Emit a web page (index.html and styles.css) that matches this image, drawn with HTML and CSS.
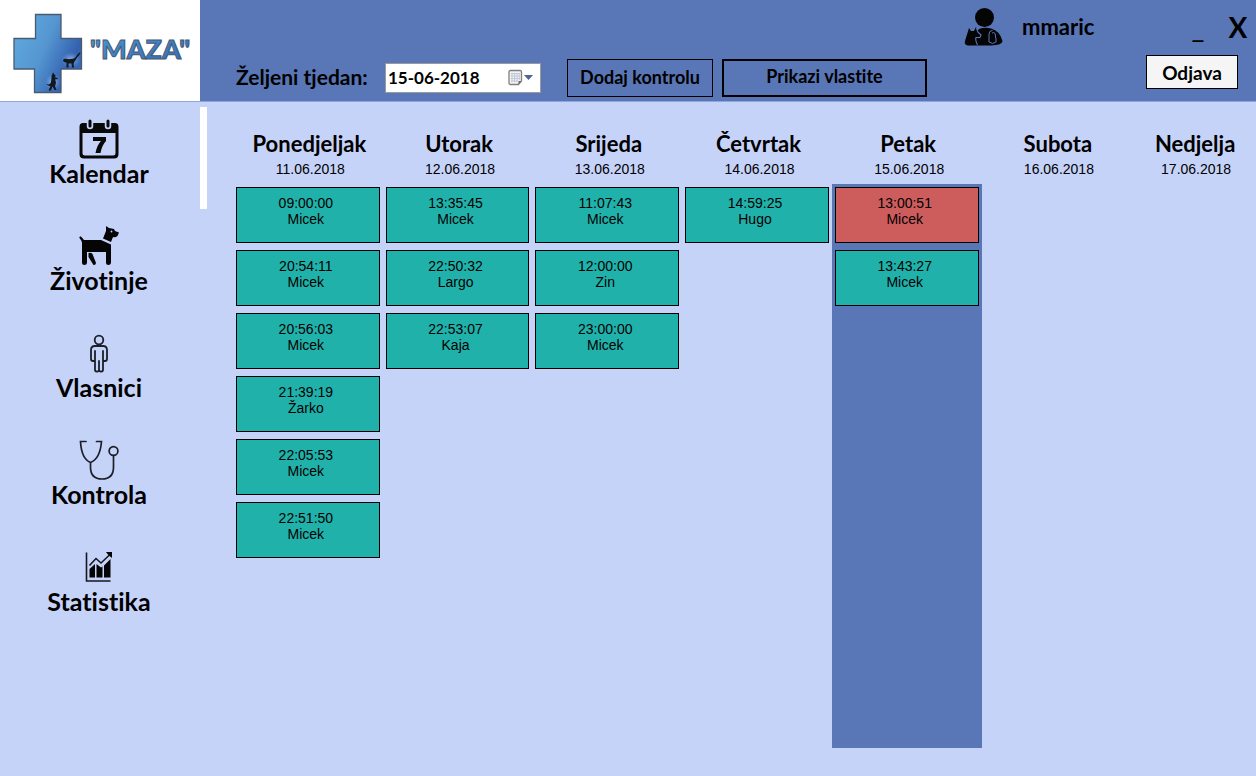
FILE: index.html
```html
<!DOCTYPE html>
<html lang="hr">
<head>
<meta charset="utf-8">
<meta name="viewport" content="width=device-width, initial-scale=1">
<title>"MAZA" – Kalendar</title>
<link rel="stylesheet" href="styles.css">
</head>
<body>
<header class="topbar">
  <div class="brand">
    <svg class="brand-logo" viewBox="0 0 200 101" role="img" aria-label="MAZA">
      <defs>
        <linearGradient id="cross" x1="0" y1="0.2" x2="1" y2="0.7">
          <stop offset="0" stop-color="#5fa9de"/><stop offset="0.45" stop-color="#5596d1"/><stop offset="0.85" stop-color="#3361b0"/><stop offset="1" stop-color="#3a6bb8"/>
        </linearGradient>
        <linearGradient id="letters" x1="0" y1="0" x2="1" y2="1">
          <stop offset="0" stop-color="#4c9bd8"/><stop offset="1" stop-color="#3566b4"/>
        </linearGradient>
        <radialGradient id="glow"><stop offset="0" stop-color="#b9d3f4" stop-opacity="0.8"/><stop offset="1" stop-color="#6b9bdc" stop-opacity="0"/></radialGradient>
      </defs>
      <path d="M35.500 14.500H61V38.500H81.500V69H61V92.500H34.500V69H14V38.500H35.500Z" fill="url(#cross)" stroke="#4a5b70" stroke-width="1.300"/>
      <ellipse cx="71" cy="60" rx="10" ry="8" fill="url(#glow)"/>
      <ellipse cx="53" cy="82" rx="8" ry="9" fill="url(#glow)"/>
      <path d="M63 60.500C64 58 67 59 69 59.300C72 58.500 74 59.500 76 56.500C77 54.500 79 53 80.500 52C80 55 78 56 76.500 58.500C75 61 74 62 73.500 64L74 67.500H72L71.500 63.500H68.500V67.500H66.500V62.500C65 62.500 63.500 62 63 60.500Z" fill="#101820"/>
      <path d="M53 72.500L54.500 74.500L56 76L54.500 77L57.500 78L58 79L55 79.500C56.500 82 56 84 55 86L56.500 90H54.500L52.500 86.500L51 90.500H48.500L50.500 86C49 86 47.500 85.500 46.500 84C49 85 50.500 84 51 82C51.500 79 51.500 78 51.500 76Z" fill="#101820"/>
      <text x="90" y="59" class="brand-name">"MAZA"</text>
    </svg>
  </div>
  <form class="toolbar">
    <label class="week-label" for="week">Željeni tjedan:</label>
    <div class="date-field">
      <input class="date-input" id="week" type="text" value="15-06-2018">
      <button class="date-open" type="button" aria-label="Otvori kalendar">
        <svg width="26" height="18" viewBox="0 0 26 18">
          <path d="M2.500 1.500H12Q13.500 1.500 13.500 3V12L10.500 15.500H2.500Q1 15.500 1 14V3Q1 1.500 2.500 1.500Z" fill="#f1f1f3" stroke="#857f7f" stroke-width="1.300"/>
          <path d="M3 4.500H11.500M3 7H11.500M3 9.500H11.500M3 12H10M4 4V13M6.500 4V13M9 4V13M11.300 4V11" stroke="#b9c3d0" stroke-width="0.800"/>
          <path d="M13.500 12H10.500V15.500Z" fill="#6f6868"/>
          <path d="M16 6H25L20.500 11Z" fill="#4a6596"/>
        </svg>
      </button>
    </div>
    <button class="btn btn-add" type="button">Dodaj kontrolu</button>
    <button class="btn btn-own" type="button">Prikazi vlastite</button>
  </form>
  <div class="account">
    <div class="account-row">
      <svg class="avatar" width="40" height="40" viewBox="0 0 40 40" aria-hidden="true">
        <circle cx="20.500" cy="10.500" r="9.500" fill="#050505"/>
        <path d="M15 22Q21 20 27 21.500Q36 24 38.500 34Q38.500 38 27 38.500H4Q0 38 1 34L5 21L7 24H10L12 20L13.500 24Z" fill="#050505"/>
        <path d="M12.500 21L13.800 25L17 28L16 30.500L12 30.500Q11 33 13.500 38" fill="none" stroke="#5976b6" stroke-width="1.100"/>
        <path d="M25 35V27Q25 23.500 28.500 23.500M32 31V35Q29 38 25 35M28 26Q32 24 31.500 31" fill="none" stroke="#5976b6" stroke-width="1"/>
      </svg>
      <span class="user-name">mmaric</span>
      <button class="win-btn win-min" type="button" aria-label="Smanji">_</button>
      <button class="win-btn" type="button" aria-label="Zatvori">X</button>
    </div>
    <button class="logout" type="button">Odjava</button>
  </div>
</header>
<div class="shell">
  <nav class="sidebar">
    <a class="nav-item nav-active" href="#kalendar" aria-current="page">
      <svg width="40" height="40" viewBox="0 0 40 40" aria-hidden="true">
        <path d="M4 4H36Q39.500 4 39.500 8V35Q39.500 39.500 35 39.500H5Q0.500 39.500 0.500 35V8Q0.500 4 4 4ZM3.500 14V34Q3.500 36.500 6 36.500H34Q36.500 36.500 36.500 34V14Z" fill="#080808" fill-rule="evenodd"/>
        <path d="M11 2V7M29 2V7" stroke="#c6d3f9" stroke-width="6.500" stroke-linecap="round"/>
        <path d="M11 2V7M29 2V7" stroke="#080808" stroke-width="3" stroke-linecap="round"/>
        <path d="M14 18H27V22Q23 26 21.500 34H16.500Q18 26 22 22H14Z" fill="#080808"/>
      </svg>
      <span>Kalendar</span>
    </a>
    <a class="nav-item" href="#zivotinje">
      <svg width="40" height="40" viewBox="0 0 40 40" aria-hidden="true">
        <path d="M0.500 12Q0 10 2 10.500L5 14H22L32 18.500V37Q31.500 39 29.500 39Q27 39 27 37V26H8V37Q7.500 39 5.500 39Q3 39 3 37V17Q3 15 0.500 12Z" fill="#050505"/>
        <path d="M9.500 27Q12 26 13.500 28L17 37Q16.500 39.500 14.500 39L9.500 31Z" fill="#050505"/>
        <path d="M27 0L30 2L35 3L36 5L40 6.500L38.500 10Q36 12 34 11L32 16L24 12.500L27 5Z" fill="#050505"/>
        <circle cx="32.500" cy="5.500" r="0.900" fill="#c6d3f9"/>
      </svg>
      <span>Životinje</span>
    </a>
    <a class="nav-item" href="#vlasnici">
      <svg width="40" height="40" viewBox="0 0 40 40" fill="none" stroke="#1c1f28" stroke-width="1.800" stroke-linecap="round" stroke-linejoin="round" aria-hidden="true">
        <circle cx="20" cy="7" r="4.300"/>
        <path d="M16 18V37Q16 38.500 17.700 38.500H18.500Q20 38.500 20 37V28V37Q20 38.500 21.500 38.500H22.300Q24 38.500 24 37V18M16 28H14Q12 28 12 26V17Q12 13 16 13H24Q28 13 28 17V26Q28 28 26 28H24"/>
      </svg>
      <span>Vlasnici</span>
    </a>
    <a class="nav-item" href="#kontrola">
      <svg width="40" height="40" viewBox="0 0 40 40" fill="none" stroke="#1c1f28" stroke-width="1.700" stroke-linecap="round" aria-hidden="true">
        <path d="M7 1.500H1.500Q2.500 19 11.500 22.500Q21 19 22.500 1.500H17.500M11.500 22.500V27Q11.500 39 23 39Q34.500 39 34.500 27V15.500"/>
        <circle cx="34.500" cy="11" r="4.400"/>
      </svg>
      <span>Kontrola</span>
    </a>
    <a class="nav-item" href="#statistika">
      <svg width="40" height="40" viewBox="0 0 40 40" aria-hidden="true">
        <path d="M7.500 5.500V34H31.500M10.500 18.500L17 11.500L22 16L31 7.500" fill="none" stroke="#15171c" stroke-width="1.600"/>
        <path d="M27 5H33V11L30.500 9L28.500 7Z" fill="#050505"/>
        <path d="M10.500 22L16 17V30.500H10.500ZM17.500 17L22 20.500L23.500 19.500V30.500H17.500ZM25 18.500L31.500 12V30.500H25Z" fill="#050505"/>
      </svg>
      <span>Statistika</span>
    </a>
  </nav>
  <main class="week">
    <section class="day">
      <h2 class="day-name">Ponedjeljak</h2>
      <p class="day-date">11.06.2018</p>
      <ul class="slots">
        <li class="slot"><time>09:00:00</time><span>Micek</span></li>
        <li class="slot"><time>20:54:11</time><span>Micek</span></li>
        <li class="slot"><time>20:56:03</time><span>Micek</span></li>
        <li class="slot"><time>21:39:19</time><span>Žarko</span></li>
        <li class="slot"><time>22:05:53</time><span>Micek</span></li>
        <li class="slot"><time>22:51:50</time><span>Micek</span></li>
      </ul>
    </section>
    <section class="day">
      <h2 class="day-name">Utorak</h2>
      <p class="day-date">12.06.2018</p>
      <ul class="slots">
        <li class="slot"><time>13:35:45</time><span>Micek</span></li>
        <li class="slot"><time>22:50:32</time><span>Largo</span></li>
        <li class="slot"><time>22:53:07</time><span>Kaja</span></li>
      </ul>
    </section>
    <section class="day">
      <h2 class="day-name">Srijeda</h2>
      <p class="day-date">13.06.2018</p>
      <ul class="slots">
        <li class="slot"><time>11:07:43</time><span>Micek</span></li>
        <li class="slot"><time>12:00:00</time><span>Zin</span></li>
        <li class="slot"><time>23:00:00</time><span>Micek</span></li>
      </ul>
    </section>
    <section class="day">
      <h2 class="day-name">Četvrtak</h2>
      <p class="day-date">14.06.2018</p>
      <ul class="slots">
        <li class="slot"><time>14:59:25</time><span>Hugo</span></li>
      </ul>
    </section>
    <section class="day">
      <h2 class="day-name">Petak</h2>
      <p class="day-date">15.06.2018</p>
      <ul class="slots slots-selected">
        <li class="slot slot-urgent"><time>13:00:51</time><span>Micek</span></li>
        <li class="slot"><time>13:43:27</time><span>Micek</span></li>
      </ul>
    </section>
    <section class="day">
      <h2 class="day-name">Subota</h2>
      <p class="day-date">16.06.2018</p>
    </section>
    <section class="day">
      <h2 class="day-name">Nedjelja</h2>
      <p class="day-date">17.06.2018</p>
    </section>
  </main>
</div>
</body>
</html>
```
FILE: styles.css
```css
* { box-sizing: border-box; }

body {
  margin: 0;
  min-height: 100vh;
  display: flex;
  flex-direction: column;
  background: #c6d3f9;
  color: #000;
  font-family: "Century Gothic", Lato, sans-serif;
  font-weight: 700;
  font-variant-ligatures: none;
}

button, input { font: inherit; font-variant-ligatures: none; color: inherit; }
button { cursor: pointer; }

.topbar {
  display: flex;
  background: #5976b6;
  border-bottom: 1px solid #8fa6dc;
}

.brand { width: 200px; flex: none; background: #fff; }
.brand-logo { display: block; width: 100%; }
.brand-name {
  font-family: Lato, sans-serif;
  font-size: 27px;
  font-weight: 900;
  fill: url(#letters);
  stroke: #46586f;
  stroke-width: 1px;
}

.toolbar {
  flex: 1;
  display: flex;
  align-items: flex-end;
  padding: 0 0 4px 36px;
}
.week-label { width: 149px; padding-bottom: 4px; font-size: 21px; line-height: 32px; white-space: nowrap; }

.date-field {
  display: flex;
  align-items: center;
  width: 156px;
  height: 30px;
  margin: 0 26px 4px 0;
  background: #fff;
  border: 1px solid #9a9a9a;
}
.date-input {
  flex: 1;
  min-width: 0;
  padding: 0 0 2px 2px;
  border: 0;
  background: none;
  font-size: 17px;
}
.date-open { display: flex; padding: 0; margin-right: 6px; border: 0; background: none; }

.btn {
  height: 38px;
  padding: 0 0 2px;
  background: transparent;
  border: 1px solid #000;
  font-size: 18px;
}
.btn-add { width: 146px; margin-right: 9px; }
.btn-own { width: 205px; padding-bottom: 4px; border-width: 2px; }

.account {
  display: flex;
  flex-direction: column;
  align-items: flex-end;
  padding: 7px 8px 0 0;
}
.account-row { display: flex; align-items: center; height: 40px; }
.user-name { width: 184px; padding-left: 18px; font-size: 22px; line-height: 40px; }
.win-btn { width: 20px; padding: 0; border: 0; background: none; font-size: 28px; line-height: 40px; }
.win-min { margin-right: 20px; font-weight: 400; }
.logout {
  width: 92px;
  height: 34px;
  margin: 8px 10px 0 0;
  padding: 0;
  background: #f5f5f5;
  border: 1px solid #000;
  font-size: 19px;
}

.shell { flex: 1; display: flex; }

.sidebar {
  width: 207px;
  flex: none;
  display: flex;
  flex-direction: column;
  gap: 5px;
  padding-top: 5px;
}
.nav-item {
  display: flex;
  flex-direction: column;
  align-items: center;
  height: 102px;
  padding: 12px 2px 0 0;
  border-right: 7px solid transparent;
  color: #000;
  font-size: 25px;
  line-height: 28px;
  text-decoration: none;
}
.nav-active { border-right-color: #fff; }

.week {
  flex: 1;
  display: grid;
  grid-template-columns: repeat(6, 6fr) 5fr;
  padding: 30px 0 28px 26px;
}
.day { display: flex; flex-direction: column; min-width: 0; text-align: center; }
.day-name { margin: 0; padding-left: 3px; font-size: 22px; line-height: 24px; }
.day-date {
  margin: 0;
  padding: 4px 0 6px 5px;
  font: 400 14px/18px "Liberation Sans", sans-serif;
}

.slots {
  flex: 1;
  display: flex;
  flex-direction: column;
  gap: 7px;
  margin: 0;
  padding: 3px;
  list-style: none;
}
.slots-selected { background: #5976b6; }
.slot {
  display: flex;
  flex-direction: column;
  height: 56px;
  padding: 7px 4px 0 0;
  background: #20b2aa;
  border: 1px solid #000;
  font: 400 14px/16px "Liberation Sans", sans-serif;
}
.slot-urgent { background: #cd5c5c; }
```
